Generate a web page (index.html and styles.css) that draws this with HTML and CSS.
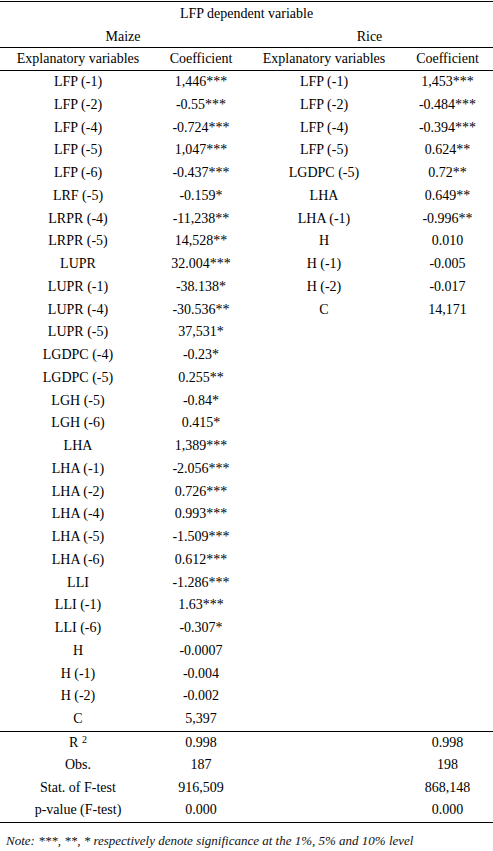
FILE: index.html
```html
<!DOCTYPE html>
<html>
<head>
<meta charset="utf-8">
<link rel="stylesheet" href="styles.css">
</head>
<body>
<div class="tbl">
  <div class="title">LFP dependent variable</div>
  <div class="group">Maize</div><div class="group">Rice</div>
  <div class="head">Explanatory variables</div><div class="head">Coefficient</div><div class="head">Explanatory variables</div><div class="head">Coefficient</div>
  <div class="body">
    <div>LFP (-1)</div><div>1,446***</div><div>LFP (-1)</div><div>1,453***</div>
    <div>LFP (-2)</div><div>-0.55***</div><div>LFP (-2)</div><div>-0.484***</div>
    <div>LFP (-4)</div><div>-0.724***</div><div>LFP (-4)</div><div>-0.394***</div>
    <div>LFP (-5)</div><div>1,047***</div><div>LFP (-5)</div><div>0.624**</div>
    <div>LFP (-6)</div><div>-0.437***</div><div>LGDPC (-5)</div><div>0.72**</div>
    <div>LRF (-5)</div><div>-0.159*</div><div>LHA</div><div>0.649**</div>
    <div>LRPR (-4)</div><div>-11,238**</div><div>LHA (-1)</div><div>-0.996**</div>
    <div>LRPR (-5)</div><div>14,528**</div><div>H</div><div>0.010</div>
    <div>LUPR</div><div>32.004***</div><div>H (-1)</div><div>-0.005</div>
    <div>LUPR (-1)</div><div>-38.138*</div><div>H (-2)</div><div>-0.017</div>
    <div>LUPR (-4)</div><div>-30.536**</div><div>C</div><div>14,171</div>
    <div>LUPR (-5)</div><div>37,531*</div><div></div><div></div>
    <div>LGDPC (-4)</div><div>-0.23*</div><div></div><div></div>
    <div>LGDPC (-5)</div><div>0.255**</div><div></div><div></div>
    <div>LGH (-5)</div><div>-0.84*</div><div></div><div></div>
    <div>LGH (-6)</div><div>0.415*</div><div></div><div></div>
    <div>LHA</div><div>1,389***</div><div></div><div></div>
    <div>LHA (-1)</div><div>-2.056***</div><div></div><div></div>
    <div>LHA (-2)</div><div>0.726***</div><div></div><div></div>
    <div>LHA (-4)</div><div>0.993***</div><div></div><div></div>
    <div>LHA (-5)</div><div>-1.509***</div><div></div><div></div>
    <div>LHA (-6)</div><div>0.612***</div><div></div><div></div>
    <div>LLI</div><div>-1.286***</div><div></div><div></div>
    <div>LLI (-1)</div><div>1.63***</div><div></div><div></div>
    <div>LLI (-6)</div><div>-0.307*</div><div></div><div></div>
    <div>H</div><div>-0.0007</div><div></div><div></div>
    <div>H (-1)</div><div>-0.004</div><div></div><div></div>
    <div>H (-2)</div><div>-0.002</div><div></div><div></div>
    <div>C</div><div>5,397</div><div></div><div></div>
  </div>
  <div class="stats">
    <div>R <sup>2</sup></div><div>0.998</div><div></div><div>0.998</div>
    <div>Obs.</div><div>187</div><div></div><div>198</div>
    <div>Stat. of F-test</div><div>916,509</div><div></div><div>868,148</div>
    <div>p-value (F-test)</div><div>0.000</div><div></div><div>0.000</div>
  </div>
</div>
<p class="note">Note: ***, **, * respectively denote significance at the 1%, 5% and 10% level</p>
</body>
</html>
```

FILE: styles.css
```css
html, body {
  margin: 0;
  padding: 0;
  background: #fff;
}
body {
  font-family: "Liberation Serif", "Times New Roman", serif;
  font-size: 14px;
  color: #000;
}
.tbl {
  margin-top: 1px;
  width: 493px;
  display: grid;
  grid-template-columns: 156px 90px 156px 91px;
  border-top: 1px solid #000;
}
.tbl div {
  text-align: center;
  white-space: nowrap;
}
.title {
  grid-column: 1 / 5;
  line-height: 24px;
}
.group {
  grid-column: span 2;
  line-height: 21px;
  border-bottom: 1px solid #000;
}
.head {
  line-height: 22px;
  border-bottom: 1px solid #000;
}
.tbl .body,
.tbl .stats {
  grid-column: 1 / 5;
  display: grid;
  grid-template-columns: 156px 90px 156px 91px;
  border-bottom: 1px solid #000;
}
.tbl .body {
  grid-auto-rows: 22.76px;
}
.tbl .body div {
  line-height: 22.76px;
}
.tbl .stats {
  grid-auto-rows: 22.5px;
}
.tbl .stats div {
  line-height: 22.5px;
}
sup {
  font-size: 10px;
  line-height: 0;
  vertical-align: 4px;
}
.note {
  margin: 10px 0 0 6px;
  font-size: 13px;
  line-height: 15px;
  font-style: italic;
  color: #111;
}
```
